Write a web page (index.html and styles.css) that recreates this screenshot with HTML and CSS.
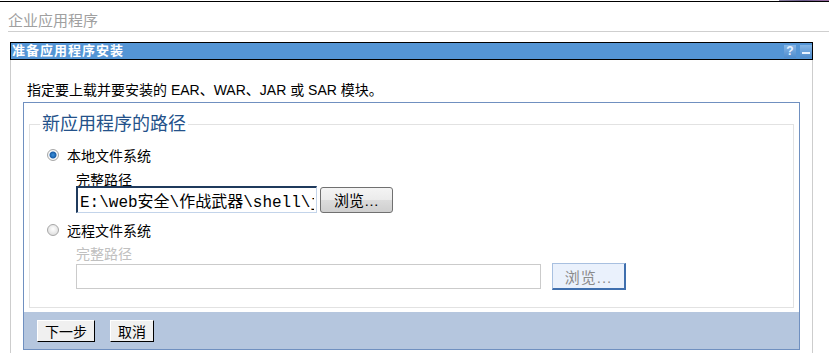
FILE: index.html
```html
<!DOCTYPE html>
<html lang="zh-CN">
<head>
    <meta charset="UTF-8">
    <title>企业应用程序</title>
    <link rel="stylesheet" href="styles.css">
</head>
<body>
    <div class="topline"><span class="corner"></span></div>
    <div class="page-title">企业应用程序</div>

    <div class="panel">
        <div class="panel-head">
            <span class="panel-title">准备应用程序安装</span>
            <span class="tools">
                <span class="tool">?</span>
                <span class="tool tool-min"></span>
            </span>
        </div>
        <div class="panel-body">
            <p class="intro">指定要上载并要安装的 EAR、WAR、JAR 或 SAR 模块。</p>

            <div class="form-box">
                <fieldset class="paths">
                    <legend>新应用程序的路径</legend>

                    <label class="choice first"><input type="radio" name="src" checked> 本地文件系统</label>
                    <div class="path-row">
                        <div class="path-label">完整路径</div>
                        <div class="path-field">
                            <input class="path-input local" type="text" value="E:\web安全\作战武器\shell\jsp.war">
                            <button class="browse">浏览…</button>
                        </div>
                    </div>

                    <label class="choice"><input type="radio" name="src"> 远程文件系统</label>
                    <div class="path-row disabled">
                        <div class="path-label">完整路径</div>
                        <div class="path-field">
                            <input class="path-input remote" type="text" disabled>
                            <button class="browse browse-remote" disabled>浏览...</button>
                        </div>
                    </div>
                </fieldset>

                <div class="actions">
                    <button class="btn">下一步</button>
                    <button class="btn">取消</button>
                </div>
            </div>
        </div>
    </div>
</body>
</html>
```

FILE: styles.css
```css
body {
    margin: 0;
    font-family: "Liberation Sans", "Noto Sans CJK SC", sans-serif;
    font-size: 14px;
    color: #000;
    background: #fff;
    width: 829px;
    height: 353px;
    overflow: hidden;
}
.topline {
    height: 1px;
    margin-top: 1px;
    background: #000;
    position: relative;
}
.corner {
    position: absolute;
    right: 0;
    top: -2px;
    width: 50px;
    height: 2px;
    background: linear-gradient(to right, #8a7fa0, #6a5a8a, #9a6aa0);
}
.page-title {
    margin-left: 8px;
    padding-top: 9px;
    height: 20px;
    line-height: 20px;
    font-size: 15px;
    color: #a0a0a0;
    border-bottom: 1px solid #cfcfcf;
}
.panel {
    margin: 10px 0 0 10px;
    width: 803px;
}
.panel-head {
    display: flex;
    justify-content: space-between;
    align-items: center;
    height: 16px;
    background: #5495d5;
    border: 1px solid #000;
}
.panel-title {
    color: #fff;
    font-weight: bold;
    font-size: 13px;
    letter-spacing: 1px;
    padding-left: 1px;
    line-height: 16px;
}
.tools {
    display: flex;
    gap: 4px;
}
.tool {
    width: 12px;
    height: 13px;
    background: linear-gradient(#86b6e6, #4f8ccc);
    color: #e8f2ff;
    font-size: 12px;
    font-weight: bold;
    line-height: 13px;
    text-align: center;
}
.tool-min {
    position: relative;
}
.tool-min::after {
    content: "";
    position: absolute;
    left: 2px;
    right: 2px;
    top: 7px;
    height: 2px;
    background: #e8f2ff;
}
.panel-body {
    border-left: 1px solid #cdcdcd;
    border-right: 1px solid #cdcdcd;
    padding: 0 12px;
    height: 300px;
}
.intro {
    margin: 0;
    padding: 20px 0 0 4px;
    height: 22px;
    line-height: 20px;
}
.form-box {
    border: 1px solid #7090c0;
}
.paths {
    margin: 10px 5px 4px 5px;
    padding: 0 0 17px 17px;
    border: 1px solid #e2e2e2;
}
.paths legend {
    font-size: 18px;
    color: #24528a;
    padding: 0 2px;
    margin-left: -7px;
    line-height: 22px;
}
.choice {
    display: flex;
    align-items: center;
    gap: 8px;
    height: 22px;
}
.choice.first {
    margin-top: 9px;
}
.choice input {
    appearance: none;
    margin: 0;
    width: 12px;
    height: 12px;
    border-radius: 50%;
    border: 1px solid #a7a7a7;
    background: radial-gradient(circle at 50% 40%, #fff, #d6d6d6);
}
.choice input:checked {
    background: radial-gradient(circle, #3a90dc 0, #1a5ea8 3px, #fff 4px, #d4d4d4 100%);
}
.path-row {
    padding-left: 29px;
}
.path-label {
    height: 13px;
    line-height: 14px;
    margin-top: 7px;
}
.path-field {
    display: flex;
    align-items: center;
}
.path-input {
    box-sizing: border-box;
    font-family: "Liberation Mono", "Noto Sans CJK SC", monospace;
    font-size: 16px;
    padding: 0 2px;
    margin: 0;
}
.local {
    width: 241px;
    height: 27px;
    border: 2px solid #1f3a5c;
    border-right: 1px solid #c3d4ea;
    border-bottom: 1px solid #c3d4ea;
    color: #000;
    margin-bottom: 6px;
}
.browse {
    margin: 0 0 6px 3px;
    width: 73px;
    height: 26px;
    font-family: "Liberation Sans", "Noto Sans CJK SC", sans-serif;
    font-size: 15px;
    border: 1px solid #707070;
    border-radius: 3px;
    background: linear-gradient(#f4f4f4 0, #ebebeb 50%, #dcdcdc 51%, #cfcfcf 100%);
    color: #000;
    padding: 0;
}
.disabled .path-label {
    color: #c0c0c0;
    margin-top: 6px;
    margin-bottom: 3px;
}
.remote {
    width: 465px;
    height: 25px;
    border: 1px solid #cbcbcb;
    background: #fff;
}
.browse-remote {
    margin: 0 0 0 11px;
    height: 27px;
    width: 74px;
    border-radius: 0;
    border: 1px solid #a8c0e0;
    border-right: 2px solid #3f6fae;
    border-bottom: 2px solid #3f6fae;
    background: #eaf1fc;
    color: #8a8a8a;
    letter-spacing: 1px;
}
.actions {
    background: #b5c6de;
    height: 37px;
    display: flex;
    align-items: center;
    gap: 15px;
    padding-left: 13px;
}
.btn {
    font-family: "Liberation Sans", "Noto Sans CJK SC", sans-serif;
    font-size: 14px;
    height: 22px;
    padding: 0 7px;
    background: #f0f0f0;
    border: 1px solid #fff;
    border-right-color: #000;
    border-bottom-color: #000;
    color: #000;
}
```
